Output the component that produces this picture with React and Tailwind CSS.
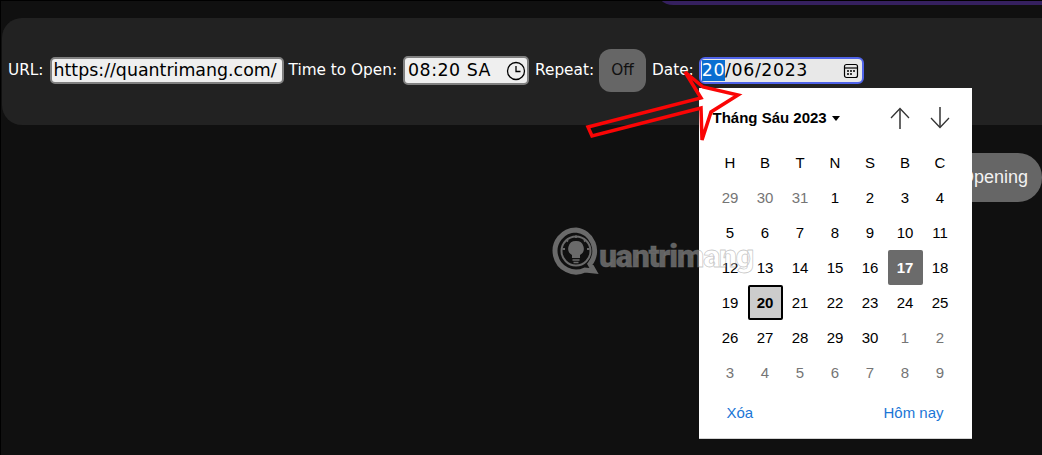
const weeks = [
  [29, 30, 31, 1, 2, 3, 4],
  [5, 6, 7, 8, 9, 10, 11],
  [12, 13, 14, 15, 16, 17, 18],
  [19, 20, 21, 22, 23, 24, 25],
  [26, 27, 28, 29, 30, 1, 2],
  [3, 4, 5, 6, 7, 8, 9],
];

function isOutside(row, day) {
  return (row === 0 && day > 20) || (row >= 4 && day < 10);
}

function DayCell({ day, row }) {
  if (row === 2 && day === 17) {
    return <div className="h-[35px] pt-[1px] flex items-center justify-center rounded-[2px] bg-[#6b6b6b] text-white font-bold">{day}</div>;
  }
  if (row === 3 && day === 20) {
    return <div className="h-[35px] pt-[1px] flex items-center justify-center rounded-[2px] bg-[#cccccc] border-2 border-black text-black font-bold">{day}</div>;
  }
  return (
    <div className={`h-[35px] pt-[1px] flex items-center justify-center ${isOutside(row, day) ? 'text-[#757575]' : 'text-black'}`}>
      {day}
    </div>
  );
}

function StepArrow({ down }) {
  return (
    <svg width="20" height="22" viewBox="0 0 20 22" fill="none" className={down ? 'rotate-180' : ''}>
      <path d="M10 2v20" stroke="#666666" strokeWidth="2" />
      <path d="M1 11l9-9.500 9 9.500" stroke="#333333" strokeWidth="1.300" />
    </svg>
  );
}

function Calendar() {
  return (
    <div className="absolute left-[699px] top-[88px] w-[273px] h-[351px] bg-white pl-[13.5px] pr-[14.5px] font-['Liberation_Sans',sans-serif] text-[15px] border-b border-[#d4d4d4]">
      <div className="h-[57px] flex items-center justify-between pt-[3px]">
        <div className="flex items-center gap-[5px] text-[15px] font-bold text-black">
          Tháng Sáu 2023
          <span className="w-0 h-0 border-x-[4px] border-x-transparent border-t-[5px] border-t-black" />
        </div>
        <div className="flex items-center gap-[20px] pr-[8px]">
          <StepArrow />
          <StepArrow down />
        </div>
      </div>
      <div className="grid grid-cols-7 text-black">
        {['H', 'B', 'T', 'N', 'S', 'B', 'C'].map((d, i) => (
          <div key={i} className="h-[35px] pt-[1px] flex items-center justify-center">{d}</div>
        ))}
      </div>
      <div className="grid grid-cols-7">
        {weeks.map((w, r) => w.map((d, i) => <DayCell key={`${r}-${i}`} day={d} row={r} />))}
      </div>
      <div className="flex justify-between pl-[14px] pr-[14px] pt-[12px] text-[#1b76d6]">
        <span>Xóa</span>
        <span>Hôm nay</span>
      </div>
    </div>
  );
}

function Watermark() {
  return (
    <div className="absolute left-[552px] top-[227px] flex items-center pointer-events-none">
      <svg width="48" height="48" viewBox="0 0 48 48" fill="none" className="text-[#6a6a6a]">
        <path d="M24 3a21 21 0 1 0 9 40l9 1-4-7A21 21 0 0 0 24 3z" stroke="currentColor" strokeWidth="5" />
        <circle cx="24" cy="24" r="14.500" stroke="currentColor" strokeWidth="2" />
        <path d="M24 14a7.500 7.500 0 0 0-4 14v3h8v-3a7.500 7.500 0 0 0-4-14z" fill="currentColor" />
        <path d="M20.500 33h7M21.500 35.500h5" stroke="currentColor" strokeWidth="1.500" />
        <path d="M24 8.500v2.500M14 12.500l2 2M34 12.500l-2 2M10.500 22h2.500M37.500 22H35" stroke="currentColor" strokeWidth="1.800" />
      </svg>
      <span className="font-['Roboto',sans-serif] font-black text-[32px] leading-none tracking-[-1.2px] mt-[10px] -ml-[1px] text-white/35 [-webkit-text-stroke:0.8px_rgba(120,120,120,0.4)]">
        uantrimang
      </span>
    </div>
  );
}

function RedArrow() {
  return (
    <svg className="absolute left-0 top-0 pointer-events-none" width="1042" height="455" fill="none">
      <path
        d="M685 72L703 87L738 95L711 112L702 140L701 108L592 136L588 127L701 98Z"
        stroke="#fa0505"
        strokeWidth="3.500"
      />
    </svg>
  );
}

export default function App() {
  return (
    <div className="relative w-[1042px] h-[455px] overflow-hidden bg-[#101010] pt-[18px] pl-[2px] font-['DejaVu_Sans',sans-serif] text-[15.3px] text-white">
      {/* purple edge of the bubble above */}
      <div className="absolute left-[655px] -top-[20px] w-[420px] h-[25px] rounded-b-[18px] bg-[#35205f]" />

      <div className="w-[1070px] h-[107px] rounded-[20px] bg-[#222222] flex items-center pl-[6px] pb-[2px] gap-[6px]">
        <span>URL:</span>
        <div className="w-[234px] h-[27px] rounded-[5px] border-2 border-[#808080] bg-[#efefef] text-black text-[17.4px] flex items-center pl-[2px] overflow-hidden whitespace-nowrap">
          https://quantrimang.com/
        </div>
        <span className="-ml-[1px]">Time to Open:</span>
        <div className="w-[126px] h-[29px] rounded-[5px] border-2 border-[#808080] bg-[#efefef] text-black text-[17.4px] flex items-center pl-[3px] pr-[1px] justify-between">
          <span className="whitespace-pre tracking-[0.5px]">08:20 SA</span>
          <svg width="20" height="20" viewBox="0 0 20 20" fill="none" stroke="black" strokeWidth="1.300">
            <circle cx="10" cy="10" r="8.500" />
            <path d="M10 5v5.500h4.500" />
          </svg>
        </div>
        <span>Repeat:</span>
        <div className="w-[47px] h-[43px] -ml-[1px] rounded-[12px] bg-[#666666] text-[#111111] flex items-center justify-center">Off</div>
        <span>Date:</span>
        <div className="w-[165px] h-[27px] -ml-[1px] rounded-[6px] border-2 border-[#4f63e8] bg-[#e8e8e8] text-black text-[17.4px] flex items-center pl-[1px] pr-[3px] justify-between">
          <span className="whitespace-pre tracking-[0.6px]"><span className="inline-block leading-[21px] bg-[#0a6ed1] text-white">20</span>/06/2023</span>
          <svg width="16" height="16" viewBox="0 0 16 16" fill="none" stroke="black" strokeWidth="1.200">
            <rect x="1.500" y="1.500" width="13" height="13" rx="2" />
            <path d="M1.500 5h13" />
            <path d="M4 8h2M7 8h2M10 8h2M4 11h2M7 11h2" strokeWidth="1.500" />
          </svg>
        </div>
      </div>

      {/* Start Opening pill, mostly hidden behind the calendar */}
      <div className="absolute left-[900px] top-[153px] w-[142px] h-[49px] rounded-r-[24px] bg-[#666666] flex items-center justify-end pr-[14px] font-['Liberation_Sans',sans-serif] text-[18px] text-[#f2f2f2]">
        Opening
      </div>

      <Calendar />
      <Watermark />
      <RedArrow />
      {/* thin black edge of the captured window */}
      <div className="absolute inset-0 pointer-events-none shadow-[inset_1px_1px_0_#000]" />
    </div>
  );
}
